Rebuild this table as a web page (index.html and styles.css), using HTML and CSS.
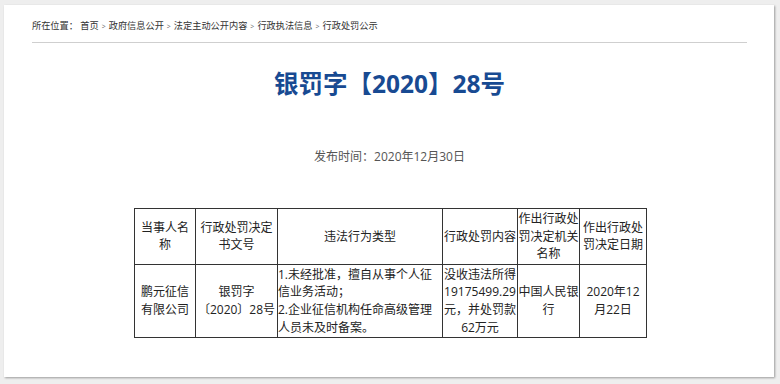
FILE: index.html
```html
<!DOCTYPE html>
<html lang="zh-CN">
<head>
<meta charset="utf-8">
<title>银罚字【2020】28号</title>
<link rel="stylesheet" href="styles.css">
</head>
<body>
<div class="card">
  <div class="crumbs">
    <span>所在位置：</span>
    <a>首页</a><span class="sep">&gt;</span><a>政府信息公开</a><span class="sep">&gt;</span><a>法定主动公开内容</a><span class="sep">&gt;</span><a>行政执法信息</a><span class="sep">&gt;</span><a>行政处罚公示</a>
  </div>
  <h1 class="title">银罚字【2020】28号</h1>
  <div class="date">发布时间：2020年12月30日</div>
  <table class="info">
    <colgroup>
      <col class="c1"><col class="c2"><col class="c3"><col class="c4"><col class="c5"><col class="c6">
    </colgroup>
    <tr class="head">
      <td>当事人名称</td>
      <td>行政处罚决定书文号</td>
      <td>违法行为类型</td>
      <td>行政处罚内容</td>
      <td>作出行政处罚决定机关名称</td>
      <td>作出行政处罚决定日期</td>
    </tr>
    <tr class="body">
      <td>鹏元征信有限公司</td>
      <td>银罚字〔2020〕28号</td>
      <td class="left">1.未经批准，擅自从事个人征信业务活动；<br>2.企业征信机构任命高级管理人员未及时备案。</td>
      <td>没收违法所得19175499.29元，并处罚款62万元</td>
      <td>中国人民银行</td>
      <td>2020年12月22日</td>
    </tr>
  </table>
</div>
</body>
</html>
```

FILE: styles.css
```css
html, body {
  margin: 0;
  padding: 0;
}
body {
  background: #eeeeee;
  font-family: "Open Sans", "Noto Sans CJK SC", sans-serif;
  color: #333;
  padding: 5px 0 0 4px;
  width: 780px;
  height: 384px;
  box-sizing: border-box;
  overflow: hidden;
}
.card {
  width: 770px;
  height: 372px;
  background: #fff;
  box-shadow: 1px 1px 2px rgba(0, 0, 0, 0.35);
  padding: 0 27px 0 28px;
  box-sizing: border-box;
}
.crumbs {
  padding-top: 15px;
  padding-bottom: 9px;
  line-height: 12px;
  font-size: 9.2px;
  color: #333;
  border-bottom: 1px solid #cfcfcf;
  white-space: nowrap;
}
.crumbs .sep {
  display: inline-block;
  margin: 0 3px;
  font-size: 7px;
  color: #666;
}
.title {
  margin: 25px 0 0;
  text-align: center;
  font-size: 24.5px;
  line-height: 32px;
  font-weight: bold;
  color: #184a92;
}
.date {
  margin-top: 49px;
  text-align: center;
  font-size: 12px;
  line-height: 16px;
  color: #555;
}
.info {
  margin: 43px auto 0;
  border-collapse: collapse;
  table-layout: fixed;
  width: 512px;
  font-size: 12px;
  line-height: 17.6px;
  color: #222;
  position: relative;
  left: 1px;
}
.info td {
  border: 1px solid #333;
  padding: 1px 0;
  text-align: center;
  vertical-align: middle;
}
.info td:nth-child(1) {
  padding: 1px 2px;
}
.info td:nth-child(6) {
  padding: 1px 2px;
}
.info td.left {
  text-align: left;
}
.c1 { width: 61px; }
.c2 { width: 82px; }
.c3 { width: 165px; }
.c4 { width: 75px; }
.c5 { width: 62px; }
.c6 { width: 67px; }
```
